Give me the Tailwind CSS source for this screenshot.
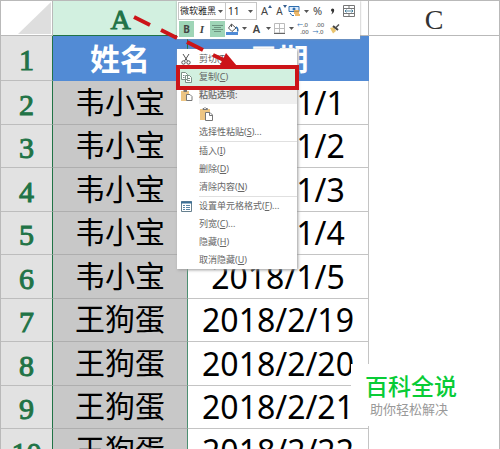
<!DOCTYPE html>
<html lang="zh-CN">
<head>
    <meta charset="UTF-8">
    <meta name="viewport" content="width=device-width, initial-scale=1.0">
    <script src="https://cdn.jsdelivr.net/npm/@tailwindcss/browser@4"></script>
    <title>复制列</title>
</head>
<body class="bg-white font-['Noto_Sans','Noto_Sans_CJK_SC',sans-serif]">
    <div class="relative h-screen overflow-hidden border-t border-x border-[#b9b9b9]">

        <!-- sheet -->
        <table class="w-full table-fixed border-separate border-spacing-0 text-center text-black">
            <colgroup>
                <col class="w-[52px]">
                <col class="w-[135px]">
                <col class="w-[181px]">
                <col>
            </colgroup>
            <thead>
                <tr class="h-[35px] font-['Liberation_Serif',serif] text-[28px] leading-7">
                    <td class="p-0 border-b border-r border-[#b9b9b9]">
                        <svg class="ml-auto block" width="34" height="33" viewBox="0 0 34 33"><path d="M33 0V32H0Z" fill="#dedede"/></svg>
                    </td>
                    <th class="p-0 pt-1 bg-[#d2f0e0] border-b border-[#217346] font-normal text-[#217346] [-webkit-text-stroke:1px]">A</th>
                    <th class="p-0 pt-1 border-b border-r border-[#b9b9b9] font-normal text-[#444]">B</th>
                    <th class="p-0 pt-1 border-b border-[#b9b9b9] font-normal text-[#333]">C</th>
                </tr>
            </thead>
            <tbody class="rows"></tbody>
        </table>

        <!-- mini toolbar -->
        <div class="absolute left-[176px] top-0 flex w-[183px] flex-col bg-white p-px pb-[2px] text-[#444] shadow-[0_0_2px_#999]">
            <div class="flex h-[18px] items-center">
                <label class="relative block h-full w-[48px] border border-[#c6c6c6]">
                    <select aria-label="字体" class="block h-full w-full appearance-none pl-px text-[9px] leading-4 text-[#222]"><option>微软雅黑</option></select>
                    <svg class="pointer-events-none absolute right-[2px] top-[7px]" width="5" height="3"><path d="M0 0H5L2.500 3Z" fill="#555"/></svg>
                </label>
                <label class="relative block h-full w-[31px] border-y border-r border-[#c6c6c6]">
                    <select aria-label="字号" class="block h-full w-full appearance-none pl-[2px] text-[10px] leading-4 text-[#222]"><option>11</option></select>
                    <svg class="pointer-events-none absolute right-[3px] top-[7px]" width="5" height="3"><path d="M0 0H5L2.500 3Z" fill="#555"/></svg>
                </label>
                <button aria-label="增大字号" class="relative w-[15px] text-[11px] leading-4">A<svg class="absolute right-0 top-[2px]" width="4" height="3"><path d="M0 3L2 0L4 3Z" fill="#345c8c"/></svg></button>
                <button aria-label="减小字号" class="relative w-[15px] text-[10px] leading-4">A<svg class="absolute right-0 top-[2px]" width="4" height="3"><path d="M0 0L2 3L4 0Z" fill="#345c8c"/></svg></button>
                <button aria-label="会计数字格式" class="flex w-[15px] justify-center">
                    <svg width="13" height="12" viewBox="0 0 13 12" fill="none"><path d="M1 1.500H11V6.500H1Z" fill="#dceafa" stroke="#2f6fb0"/><circle cx="6" cy="4" r="1.500" fill="#2f6fb0"/><path d="M6 6H11M6 8H11M7 10H12" stroke="#e8a33b" stroke-width="1.500"/><path d="M2 8L4 10.500H6" stroke="#2f6fb0"/></svg>
                </button>
                <button aria-label="更多货币" class="flex w-2 justify-center"><svg width="5" height="3"><path d="M0 0H5L2.500 3Z" fill="#555"/></svg></button>
                <button class="w-[15px] text-[11px] leading-4">%</button>
                <button aria-label="千位分隔" class="flex w-[15px] justify-center"><svg width="5" height="7" viewBox="0 0 5 7"><path d="M1 2A1.600 1.600 0 0 1 4.200 2C4.200 4 3 5.500 1 6.500C2 5.500 2.300 4.600 2.200 3.600C1.500 3.500 1 2.900 1 2Z" fill="#333"/></svg></button>
                <button aria-label="合并居中" class="flex w-[17px] justify-center">
                    <svg width="12" height="12" viewBox="0 0 12 12" fill="none"><path d="M.5.500H11.500V11.500H.5ZM.5 3.500H11.500M.5 8.500H11.500M6 .5V3.500M6 8.500V11.500" stroke="#777"/><path d="M2 6H10M3.500 4.500L2 6L3.500 7.500M8.500 4.500L10 6L8.500 7.500" stroke="#2f6f90" stroke-width=".8"/></svg>
                </button>
            </div>
            <div class="flex h-[17px] items-center pl-px">
                <button class="h-4 w-[15px] bg-[#9fd5b7] text-[10px] font-bold leading-4">B</button>
                <button class="w-4 font-['Liberation_Serif',serif] text-[11px] font-bold italic leading-4">I</button>
                <button aria-label="居中" class="flex h-4 w-[15px] items-center justify-center bg-[#9fd5b7]">
                    <svg width="11" height="8" viewBox="0 0 11 8"><path d="M0 .5H11M2 2.500H9M0 4.500H11M2 6.500H9" stroke="#6d9480"/></svg>
                </button>
                <button aria-label="填充颜色" class="flex w-[15px] justify-center">
                    <svg width="13" height="12" viewBox="0 0 13 12" fill="none"><path d="M5.500 1L10 5L6 8.500L2.500 5ZM5.500 1V4" stroke="#555"/><path d="M10 4C12 5 12 7 11.500 8.500" stroke="#2f6fb0" stroke-width="1.500"/><path d="M0 9H12V12H0Z" fill="#4f8bd6"/></svg>
                </button>
                <button aria-label="更多填充颜色" class="flex w-[9px] justify-center"><svg width="5" height="3"><path d="M0 0H5L2.500 3Z" fill="#555"/></svg></button>
                <button class="w-[15px] text-[11px] font-semibold leading-4">A</button>
                <button aria-label="更多字体颜色" class="flex w-2 justify-center"><svg width="5" height="3"><path d="M0 0H5L2.500 3Z" fill="#555"/></svg></button>
                <button aria-label="边框" class="flex w-[15px] justify-center">
                    <svg width="11" height="11" viewBox="0 0 11 11" fill="none"><path d="M.5.500H10.500V10H.5ZM5.500 0V10M0 5.500H11" stroke="#bbb"/><path d="M0 10.500H11" stroke="#666"/></svg>
                </button>
                <button aria-label="更多边框" class="flex w-2 justify-center"><svg width="5" height="3"><path d="M0 0H5L2.500 3Z" fill="#555"/></svg></button>
                <button aria-label="增加小数位数" class="h-4 w-[15px] text-[6px] leading-[7px]"><span class="block"><span class="text-[#2f6fb0]">←</span>.0</span><span class="block pl-1">.00</span></button>
                <button aria-label="减少小数位数" class="h-4 w-4 text-[6px] leading-[7px]"><span class="block pl-1">.00</span><span class="block"><span class="text-[#2f6fb0]">→</span>.0</span></button>
                <button aria-label="格式刷" class="flex w-4 justify-center">
                    <svg width="11" height="10" viewBox="0 0 11 10"><path d="M1 4L5 3L7 7L4 9.500Z" fill="#e9c46f"/><path d="M4 2L9 6" stroke="#444" stroke-width="2"/><path d="M6.500 4L10 .5" stroke="#555" stroke-width="1.500"/></svg>
                </button>
            </div>
        </div>

        <!-- context menu -->
        <div class="absolute left-[176px] top-[48px] w-[120px] bg-white pt-px text-[9px] leading-[18px] text-[#666] shadow-[1px_1px_3px_#999]">
            <button class="flex w-full items-center">
                <span class="flex w-[22px] pl-1">
                    <svg width="10" height="11" viewBox="0 0 10 11" fill="none" stroke="#555"><path d="M2 0L6.500 7M8 0L3.500 7"/><circle cx="2.500" cy="8.500" r="1.700"/><circle cx="7.500" cy="8.500" r="1.700"/></svg>
                </span>剪切(<u>T</u>)
            </button>
            <button class="flex w-full items-center bg-[#d2f0e0]">
                <span class="flex w-[22px] pl-1">
                    <svg width="11" height="11" viewBox="0 0 11 11" fill="#fff" stroke="#7d9188"><path d="M.5.500H4.500L6.500 2.500V7.500H.5ZM4.500 3.500H8.500L10.500 5.500V10.500H4.500Z"/><path d="M2 3.500H3.500M2 5.500H3.500M6 6.500H9M6 8.500H9"/></svg>
                </span>复制(<u>C</u>)
            </button>
            <div class="flex items-center">
                <span class="flex w-[22px] pl-1">
                    <svg width="12" height="11" viewBox="0 0 12 11"><path d="M0 1H8V11H0Z" fill="#edc583"/><path d="M2.500 0H6V2H2.500Z" fill="#777"/><path d="M5.500 4.500H9L11 6.500V10.500H5.500Z" fill="#fff" stroke="#777"/></svg>
                </span><span class="grow bg-[#efefef] font-medium">粘贴选项:</span>
            </div>
            <button aria-label="粘贴" class="flex h-[19px] w-full items-center pl-[23px]">
                <svg width="14" height="14" viewBox="0 0 14 14"><path d="M0 2H10V13H0Z" fill="#edc583"/><path d="M3 2.500V1.500H4L5 .5L6 1.500H7.500V2.500Z" fill="#fff" stroke="#777"/><path d="M5.500 5.500H10L12.500 8V13.500H5.500Z" fill="#fff" stroke="#777"/><path d="M9.500 5.500V8.500H12.500" fill="none" stroke="#777"/></svg>
            </button>
            <button class="block w-full pl-[22px] text-left">选择性粘贴(<u>S</u>)...</button>
            <div class="ml-[22px] border-t border-[#e0e0e0]"></div>
            <button class="block w-full pl-[22px] text-left">插入(<u>I</u>)</button>
            <button class="block w-full pl-[22px] text-left">删除(<u>D</u>)</button>
            <button class="block w-full pl-[22px] text-left">清除内容(<u>N</u>)</button>
            <div class="ml-[22px] border-t border-[#e0e0e0]"></div>
            <button class="flex w-full items-center">
                <span class="flex w-[22px] pl-1">
                    <svg width="11" height="11" viewBox="0 0 11 11" fill="none"><path d="M.5.500H10.500V10.500H.5Z" fill="#fff" stroke="#66808f"/><path d="M0 1.500H11" stroke="#3c7096" stroke-width="2"/><path d="M2 4.500H4M5 4.500H9M2 6.500H4M5 6.500H9M2 8.500H4M5 8.500H9" stroke="#5b86a5"/></svg>
                </span>设置单元格格式(<u>F</u>)...
            </button>
            <button class="block w-full pl-[22px] text-left">列宽(<u>C</u>)...</button>
            <button class="block w-full pl-[22px] text-left">隐藏(<u>H</u>)</button>
            <button class="block w-full pl-[22px] text-left">取消隐藏(<u>U</u>)</button>
        </div>

        <!-- annotations -->
        <svg class="pointer-events-none absolute left-[129px] top-[12px]" width="112" height="60" viewBox="0 0 112 60">
            <path d="M4 4L20 12M31 17L47 25M57 29L73 37M83 42L96 48" stroke="#cc1418" stroke-width="4"/>
            <path d="M107 53L90 52L96 40Z" fill="#cc1418"/>
        </svg>
        <div class="pointer-events-none absolute left-[175px] top-[64px] h-[25px] w-[123px] border-4 border-[#cc1418]"></div>

        <!-- watermark -->
        <div class="absolute right-0 top-[363px] w-[148px] bg-white pb-2 pl-[14px] pt-2">
            <p class="text-[23px] font-medium leading-[28px] text-[#08cc36]">百科全说</p>
            <p class="pl-[5px] text-[13px] leading-[18px] text-[#999]">助你轻松解决</p>
        </div>
    </div>
</body>
<script>
    const rows = [
        ["韦小宝", "2018/1/1"],
        ["韦小宝", "2018/1/2"],
        ["韦小宝", "2018/1/3"],
        ["韦小宝", "2018/1/4"],
        ["韦小宝", "2018/1/5"],
        ["王狗蛋", "2018/2/19"],
        ["王狗蛋", "2018/2/20"],
        ["王狗蛋", "2018/2/21"],
        ["王狗蛋", "2018/2/22"]
    ]

    let html = `<tr class="h-[45px] text-[30px] leading-9 font-bold text-white">
        <th class="p-0 pt-1 bg-[#e2e2e2] border-b border-r border-b-[#bdbdbd] border-r-[#217346] font-['Liberation_Serif',serif] font-normal text-[#217346] [-webkit-text-stroke:1px]">1</th>
        <td class="p-0 bg-[#528bd5] border-r border-[#217346]">姓名</td>
        <td class="p-0 bg-[#528bd5]">日期</td>
        <td class="p-0"></td>
    </tr>`

    rows.forEach((row, i) => {
        html += `<tr class="odd:h-[43px] even:h-[44px] text-[30px] leading-9">
            <th class="p-0 pt-1 bg-[#e2e2e2] border-b border-r border-b-[#bdbdbd] border-r-[#217346] font-['Liberation_Serif',serif] font-normal text-[#217346] [-webkit-text-stroke:1px]">${i + 2}</th>
            <td class="p-0 pb-[2px] bg-[#c8c8c8] border-b border-r border-b-[#aeaeae] border-r-[#4c8f72]">${row[0]}</td>
            <td class="p-0 border-b border-r border-[#c4c4c4] text-[32px]">${row[1]}</td>
            <td class="p-0"></td>
        </tr>`
    })

    document.querySelector('.rows').innerHTML = html
</script>
</html>
